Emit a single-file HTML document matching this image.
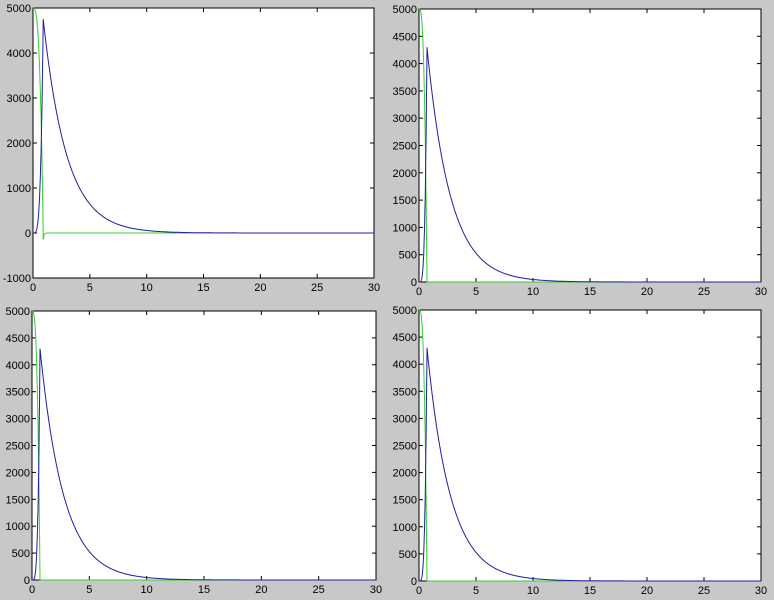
<!DOCTYPE html><html><head><style>body{margin:0;background:#c8c8c8;}svg{display:block}text{font-family:"Liberation Sans",Arial,sans-serif;font-size:11px;fill:#000}</style></head><body>
<svg id="s" width="774" height="600" xmlns="http://www.w3.org/2000/svg"></svg>
<script>
var s=document.getElementById('s'),h='';
var A=[{x0:33,x1:374,y0:8,y1:278,ymin:-1000,ymax:5000,st:1000,tl:1},
{x0:419,x1:761,y0:9,y1:282,ymin:0,ymax:5000,st:500,tl:0},
{x0:32,x1:376,y0:311,y1:580,ymin:0,ymax:5000,st:500,tl:0},
{x0:419,x1:761,y0:310,y1:581,ymin:0,ymax:5000,st:500,tl:0}];
A.forEach(function(a){
 function X(t){return a.x0+(a.x1-a.x0)*t/30}
 function Y(v){return a.y1-(a.y1-a.y0)*(v-a.ymin)/(a.ymax-a.ymin)}
 h+='<rect x="'+a.x0+'" y="'+a.y0+'" width="'+(a.x1-a.x0)+'" height="'+(a.y1-a.y0)+'" fill="#fff" stroke="#000"/>';
 for(var t=0;t<=30;t+=5){var x=X(t);h+='<line x1="'+x+'" y1="'+a.y1+'" x2="'+x+'" y2="'+(a.y1-4)+'" stroke="#000"/><line x1="'+x+'" y1="'+a.y0+'" x2="'+x+'" y2="'+(a.y0+4)+'" stroke="#000"/><text x="'+x+'" y="'+(a.y1+13)+'" text-anchor="middle">'+t+'</text>';}
 for(var v=a.ymin;v<=a.ymax;v+=a.st){var y=Y(v);h+='<line x1="'+a.x0+'" y1="'+y+'" x2="'+(a.x0+4)+'" y2="'+y+'" stroke="#000"/><line x1="'+a.x1+'" y1="'+y+'" x2="'+(a.x1-4)+'" y2="'+y+'" stroke="#000"/><text x="'+(a.x0-2)+'" y="'+(y+4)+'" text-anchor="end">'+v+'</text>';}
 var pk=a.tl?4750:4300,tp=a.tl?0.9:0.7,g='',b='';
 for(var t=0;t<=30;t+=0.02){
  var gv=t<tp?5000*(1-Math.pow(t/tp,3)):0;
  if(a.tl&&t>=tp&&t<1.2)gv=-150*Math.exp(-(t-tp)*15);
  var bv=t<tp?pk*Math.pow(t/tp,4):pk*Math.exp(-(t-tp)/2.05);
  g+=(g?'L':'M')+X(t).toFixed(1)+' '+Y(gv).toFixed(1);
  b+=(b?'L':'M')+X(t).toFixed(1)+' '+Y(bv).toFixed(1);
 }
 h+='<path d="'+g+'" fill="none" stroke="#30d030" stroke-width="1"/><path d="'+b+'" fill="none" stroke="#2020a0" stroke-width="1"/>';
});
s.innerHTML=h;
</script></body></html>
